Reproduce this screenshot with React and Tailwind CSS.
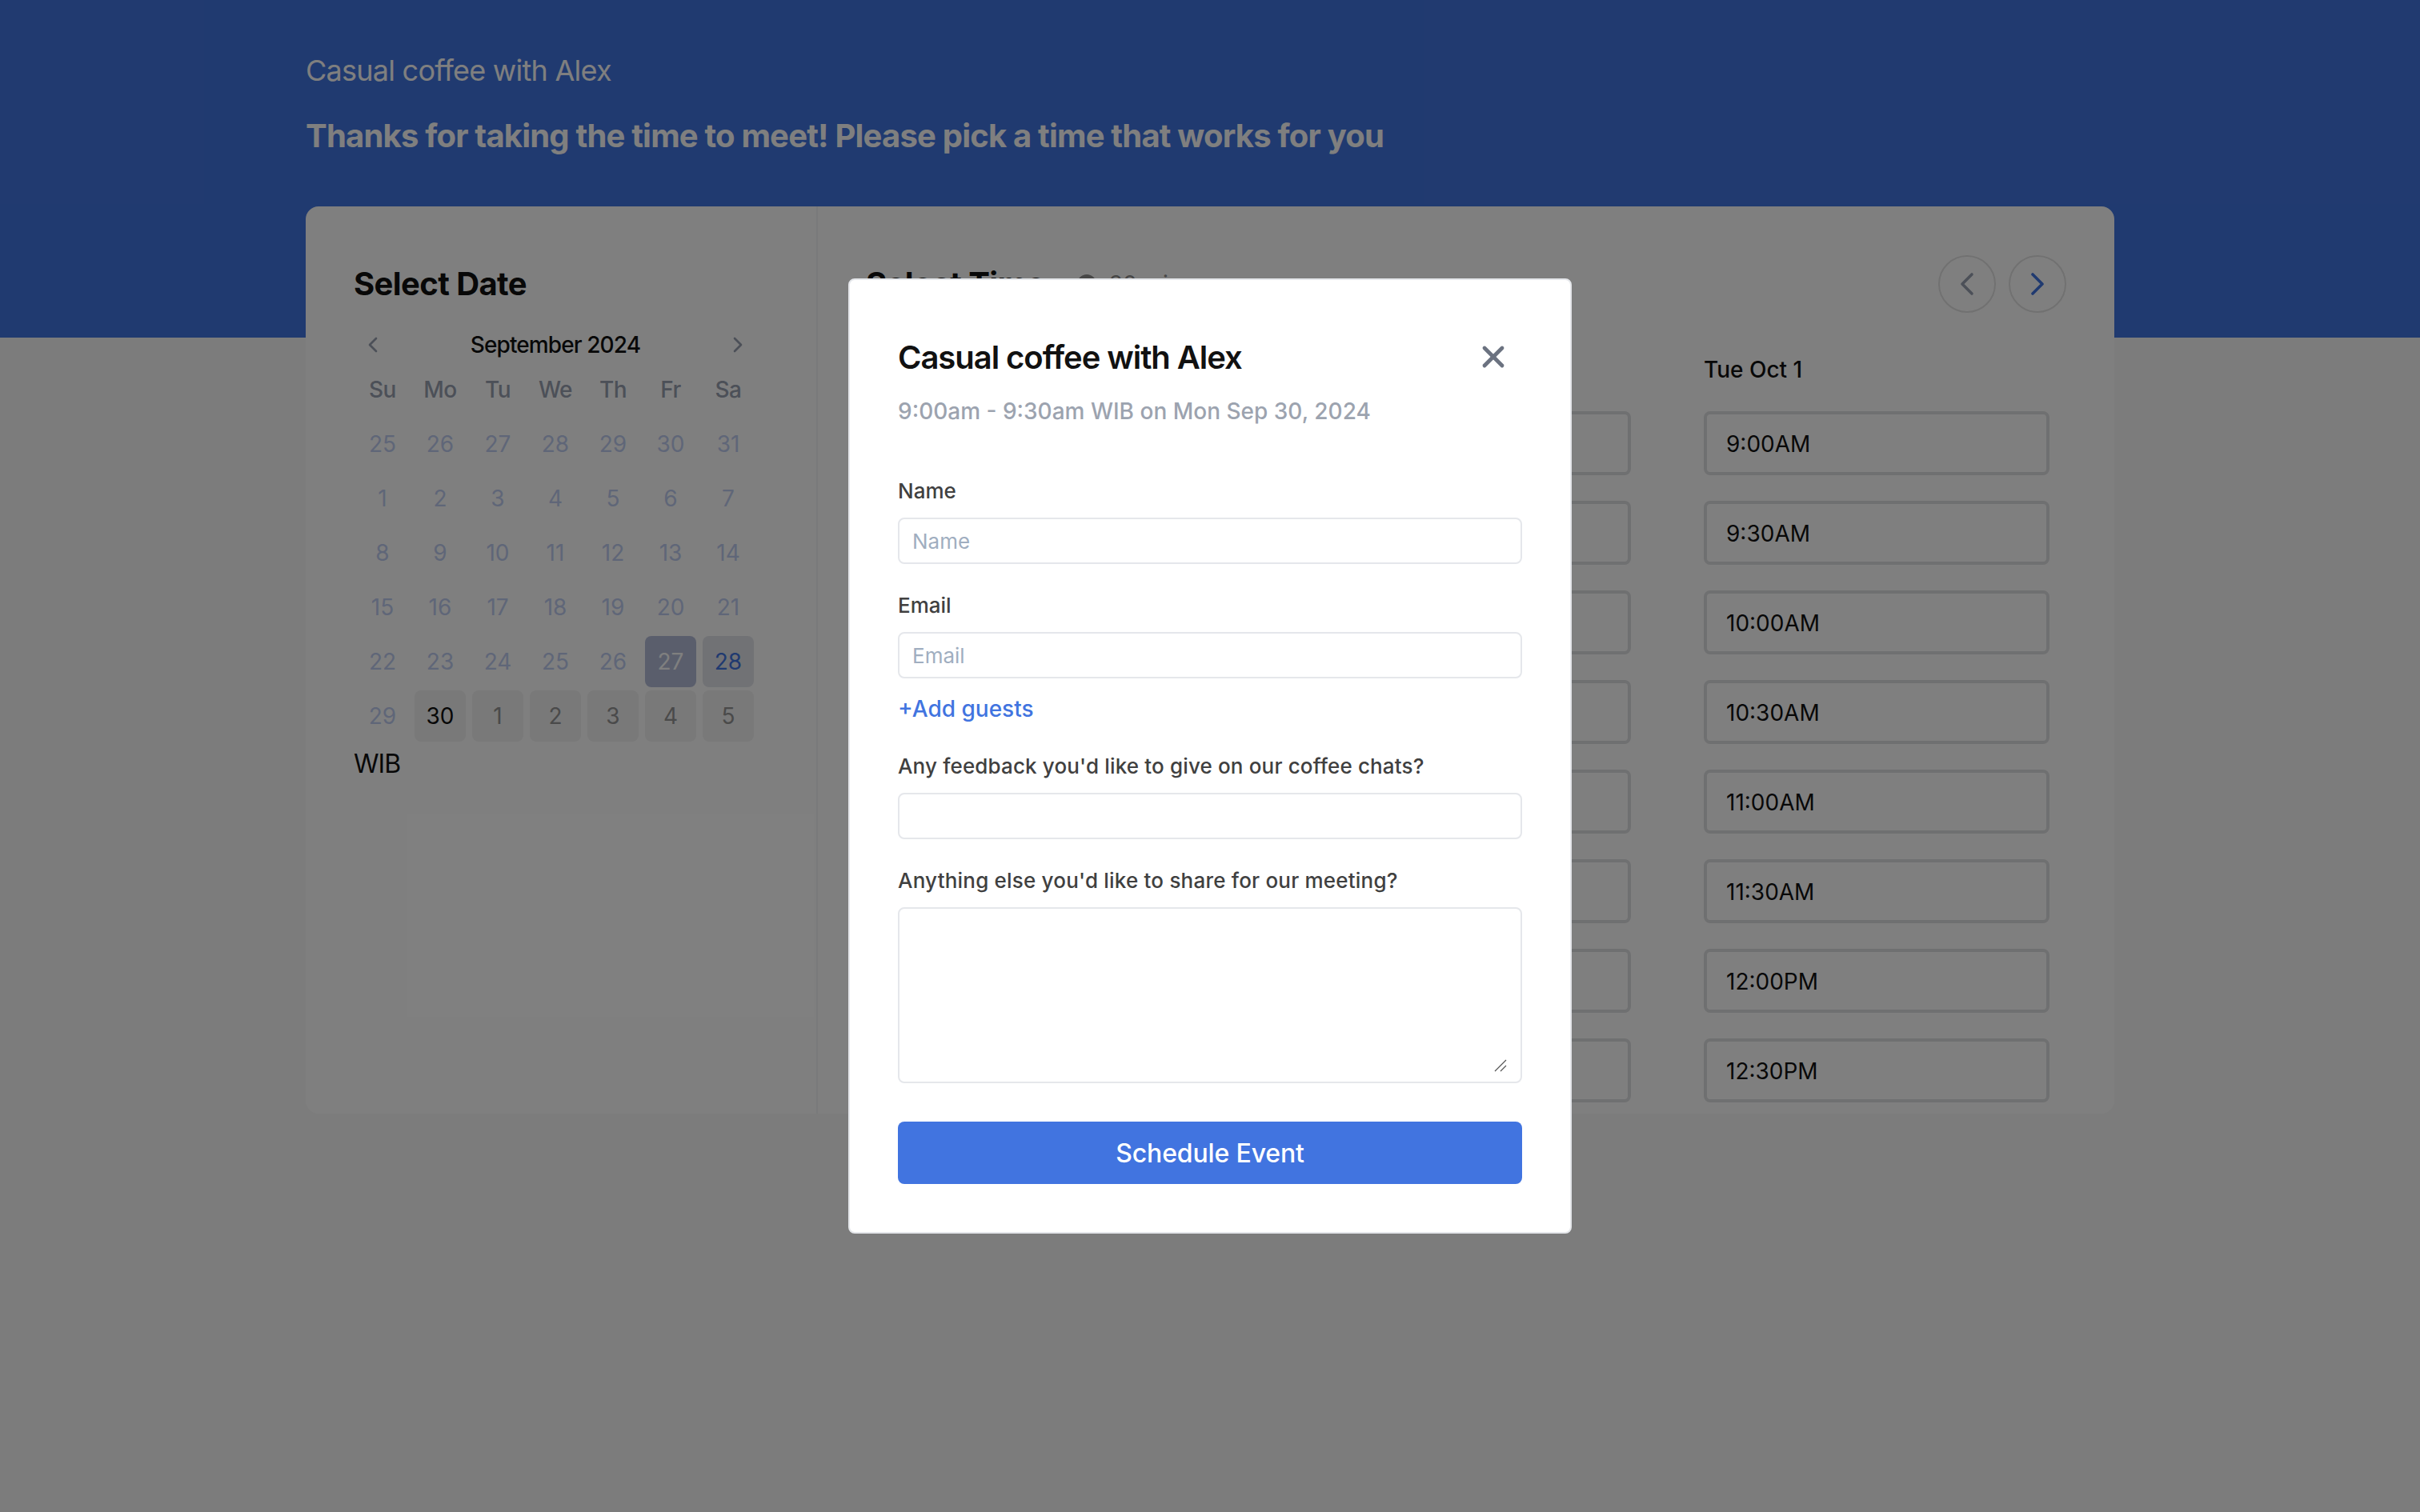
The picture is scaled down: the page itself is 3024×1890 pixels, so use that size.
import React from "react";
import { ChevronLeft, ChevronRight, X } from "lucide-react";

const weekDays = ["Su", "Mo", "Tu", "We", "Th", "Fr", "Sa"];

const calendarDays = [
  25, 26, 27, 28, 29, 30, 31,
  1, 2, 3, 4, 5, 6, 7,
  8, 9, 10, 11, 12, 13, 14,
  15, 16, 17, 18, 19, 20, 21,
  22, 23, 24, 25, 26, 27, 28,
  29, 30, 1, 2, 3, 4, 5,
];

const timeSlots = ["9:00AM", "9:30AM", "10:00AM", "10:30AM", "11:00AM", "11:30AM", "12:00PM", "12:30PM"];

const dayColumns = ["Sun Sep 29", "Mon Sep 30", "Tue Oct 1"];

function dayClass(index) {
  // 33 = today, 34 = hovered, 36 and up = the bookable days
  if (index === 33) return "rounded-lg bg-[#b4bdd8] text-white";
  if (index === 34) return "rounded-lg bg-[#e2e4ea] text-[#4174e0]";
  if (index === 36) return "rounded-lg bg-[#f2f2f2] text-[#111111]";
  if (index > 36) return "rounded-lg bg-[#f2f2f2] text-[#959595]";
  return "text-[#bfcdf0]";
}

function Field({ label, placeholder, className, labelClass = "" }) {
  return (
    <div className={className}>
      <label className={`block text-[26px] leading-[32px] font-medium text-[#404040] ${labelClass}`}>{label}</label>
      <input
        placeholder={placeholder}
        className="mt-[17px] block h-[58px] w-full rounded-lg border-2 border-[#e5e7eb] px-4 text-[26px] outline-none placeholder:text-[#a0aec0]"
      />
    </div>
  );
}

export default function App() {
  return (
    <div className="relative min-h-[1890px] overflow-hidden bg-[#f8f8f8] font-['Inter',sans-serif]">
      <div className="h-[422px] bg-[#4174e0] px-[382px] pt-[66px]">
        <h1 className="text-[36px] leading-[44px] tracking-[-0.75px] text-white">Casual coffee with Alex</h1>
        <h2 className="mt-[36px] text-[40px] leading-[48px] font-bold tracking-[-0.8px] text-white">
          Thanks for taking the time to meet! Please pick a time that works for you
        </h2>
      </div>

      <div className="mx-[382px] -mt-[164px] flex h-[1134px] overflow-hidden rounded-2xl bg-white">
        <div className="w-[640px] shrink-0 border-r-2 border-[#f3f4f6] pl-[60px] pt-[73px]">
          <h3 className="text-[40px] leading-[48px] font-bold tracking-[-0.6px] text-[#111111]">Select Date</h3>
          <div className="w-[504px]">
            <div className="mt-[34px] flex h-[36px] items-center justify-between px-2">
              <ChevronLeft className="size-8 text-[#98a0b0]" strokeWidth={2} />
              <span className="text-[28px] font-medium tracking-[-0.9px] text-[#111111]">September 2024</span>
              <ChevronRight className="size-8 text-[#98a0b0]" strokeWidth={2} />
            </div>
            <div className="mt-[20px] grid grid-cols-7">
              {weekDays.map((day) => (
                <div key={day} className="text-center text-[28px] leading-[36px] font-medium tracking-[-0.5px] text-[#98a0b0]">
                  {day}
                </div>
              ))}
            </div>
            <div className="mt-[16px] grid grid-cols-7">
              {calendarDays.map((day, index) => (
                <div key={index} className="px-1 py-[2px]">
                  <div className={`flex h-[64px] items-center justify-center text-[28px] ${dayClass(index)}`}>
                    {day}
                  </div>
                </div>
              ))}
            </div>
          </div>
          <p className="mt-[2px] text-[32px] leading-[48px] tracking-[-1px] text-[#111111]">WIB</p>
        </div>

        <div className="min-w-0 flex-1 pl-[60px] pr-[81px] pt-[73px]">
          <div className="flex h-[48px] items-center justify-between">
            <div className="flex items-center">
              <h3 className="text-[40px] leading-[48px] font-bold tracking-[-0.6px] text-[#111111]">Select Time</h3>
              <svg className="ml-[40px] size-6" viewBox="0 0 24 24">
                <circle cx="12" cy="12" r="12" fill="#8f8f8f" />
                <path d="M12 6v6l4 2" stroke="#fff" strokeWidth="2" fill="none" />
              </svg>
              <span className="ml-[16px] text-[28px] text-[#8f8f8f]">30 min</span>
            </div>
            <div className="-mr-[21px] flex shrink-0 gap-4">
              <button className="flex size-[72px] items-center justify-center rounded-full border-2 border-[#e2e2e2] text-[#98a0b0]">
                <ChevronLeft className="size-12" strokeWidth={1.8} />
              </button>
              <button className="flex size-[72px] items-center justify-center rounded-full border-2 border-[#e2e2e2] text-[#4174e0]">
                <ChevronRight className="size-12" strokeWidth={1.8} />
              </button>
            </div>
          </div>
          <div className="mt-[65px] grid grid-cols-3 gap-x-[91.5px]">
            {dayColumns.map((day) => (
              <div key={day}>
                <div className="text-[28px] leading-[36px] font-medium text-[#111111]">{day}</div>
                <div className="mt-[34px] flex flex-col gap-8">
                  {timeSlots.map((slot) => (
                    <button
                      key={slot}
                      className="h-[80px] shrink-0 rounded-lg border-4 border-[#dfe0e2] px-6 pt-[1px] text-left text-[28px] text-[#111111]"
                    >
                      {slot}
                    </button>
                  ))}
                </div>
              </div>
            ))}
          </div>
        </div>
      </div>

      <div className="absolute inset-0 flex items-center justify-center bg-black/50">
        <div className="w-[904px] rounded-lg border-2 border-[#e5e7eb] bg-white px-[60px] pb-[60px] pt-[71px]">
          <div className="flex h-[52px] items-center justify-between">
            <h2 className="text-[40px] leading-[52px] font-semibold tracking-[-1.05px] text-[#111111]">Casual coffee with Alex</h2>
            <X className="mb-[2px] mr-[14px] size-11 text-[#6b7280]" strokeWidth={2.6} />
          </div>
          <p className="mt-[23px] text-[28px] leading-[36px] font-medium text-[#9ca3af]">
            9:00am - 9:30am WIB on Mon Sep 30, 2024
          </p>
          <Field className="mt-[66px]" label="Name" placeholder="Name" />
          <Field className="mt-[36px]" label="Email" placeholder="Email" />
          <a className="mt-[20px] block text-[28px] leading-[36px] font-medium text-[#4174e0]">+Add guests</a>
          <Field
            className="mt-[38px]"
            labelClass="tracking-[0.15px]"
            label="Any feedback you'd like to give on our coffee chats?"
          />
          <div className="mt-[36px]">
            <label className="block text-[26px] leading-[32px] font-medium tracking-[0.2px] text-[#404040]">
              Anything else you'd like to share for our meeting?
            </label>
            <div className="relative mt-[17px]">
              <textarea className="block h-[220px] w-full resize-none rounded-lg border-2 border-[#e5e7eb] px-4 outline-none" />
              <svg className="absolute bottom-[14px] right-[19px] size-[16px]" viewBox="0 0 16 16" fill="none" stroke="#555555" strokeWidth="1.2">
                <path d="M1 15 15 1M8 15l7-7" />
              </svg>
            </div>
          </div>
          <button className="mt-[48px] h-[78px] w-full rounded-lg bg-[#4174e0] pt-[2px] text-[32px] font-medium tracking-[-0.15px] text-white">
            Schedule Event
          </button>
        </div>
      </div>
    </div>
  );
}
